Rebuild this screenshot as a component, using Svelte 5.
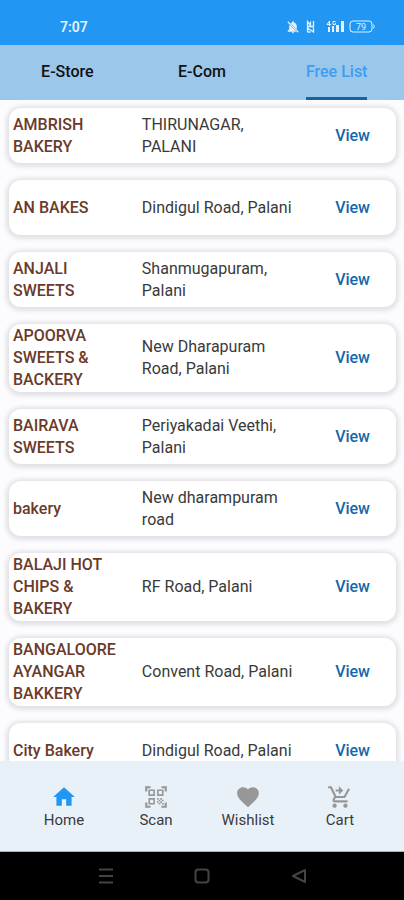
<script>
    let activeTab = $state("Free List");
    let activeNav = $state("Home");

    const tabs = ["E-Store", "E-Com", "Free List"];

    const shops = [
        { name: "AMBRISH BAKERY", address: "THIRUNAGAR, PALANI" },
        { name: "AN BAKES", address: "Dindigul Road, Palani" },
        { name: "ANJALI SWEETS", address: "Shanmugapuram, Palani" },
        { name: "APOORVA SWEETS & BACKERY", address: "New Dharapuram Road, Palani" },
        { name: "BAIRAVA SWEETS", address: "Periyakadai Veethi, Palani" },
        { name: "bakery", address: "New dharampuram road" },
        { name: "BALAJI HOT CHIPS & BAKERY", address: "RF Road, Palani" },
        { name: "BANGALOORE AYANGAR BAKKERY", address: "Convent Road, Palani" },
        { name: "City Bakery", address: "Dindigul Road, Palani" },
    ];

    const navItems = [
        { label: "Home", path: "M10 20v-6h4v6h5v-8h3L12 3 2 12h3v8z" },
        {
            label: "Scan",
            path: "M9.5 6.5v3h-3v-3h3M11 5H5v6h6V5zm-1.5 9.5v3h-3v-3h3M11 13H5v6h6v-6zm6.5-6.5v3h-3v-3h3M19 5h-6v6h6V5zm-6 8h1.5v1.5H13V13zm1.5 1.5H16V16h-1.500v-1.5zM16 13h1.5v1.5H16V13zm-3 3h1.5v1.5H13V16zm1.5 1.5H16V19h-1.5v-1.5zM16 16h1.5v1.5H16V16zm1.5-1.5H19V16h-1.5v-1.5zm0 3H19V19h-1.5v-1.5zM22 7h-2V4h-3V2h5v5zm0 15v-5h-2v3h-3v2h5zM2 22h5v-2H4v-3H2v5zM2 2v5h2V4h3V2H2z",
        },
        {
            label: "Wishlist",
            path: "M12 21.35l-1.45-1.32C5.4 15.36 2 12.28 2 8.5 2 5.42 4.42 3 7.5 3c1.74 0 3.41.81 4.5 2.09C13.09 3.81 14.76 3 16.5 3 19.58 3 22 5.42 22 8.5c0 3.78-3.4 6.86-8.55 11.54L12 21.35z",
        },
        {
            label: "Cart",
            path: "M11 9V7H8V5h3V2l4 4-4 4zM7 18c-1.1 0-1.99.9-1.99 2S5.9 22 7 22s2-.9 2-2-.9-2-2-2zm10 0c-1.1 0-1.99.9-1.99 2s.89 2 1.99 2 2-.9 2-2-.9-2-2-2zm-9.83-3.25l.03-.12.9-1.63h7.45c.75 0 1.41-.41 1.75-1.03l3.86-7.01L19.42 4l-1.1 2-2.76 5H8.53l-.13-.27L6.16 6l-.95-2-.94-2H1v2h2l3.6 7.59-1.35 2.45c-.16.28-.25.61-.25.96 0 1.1.9 2 2 2h12v-2H7.42c-.13 0-.25-.11-.25-.25z",
        },
    ];
</script>

<div class="screen">
    <header class="status">
        <span class="time">7:07</span>
        <div class="status-icons">
            <svg width="14" height="14" viewBox="0 0 24 24" role="img" aria-label="Silent">
                <path fill="currentColor" d="M12 23c1.1 0 2-.9 2-2h-4c0 1.100.9 2 2 2zM7.600 5.300L18.500 16.200V11c0-3.500-1.800-6.200-5-6.900V3.500a1.500 1.500 0 0 0-3 0v.6c-1.100.2-2.100.6-2.900 1.200zM6.200 8.500C5.800 9.300 5.500 10.100 5.500 11v5L3 18.500V20h14.700z" />
                <path fill="none" stroke="currentColor" stroke-width="2" d="M3 3l18 18" />
            </svg>
            <svg class="nfc" width="9" height="13" viewBox="0 0 9 13" role="img" aria-label="NFC">
                <path fill="none" stroke="currentColor" stroke-width="1.3" d="M1.500 6V1.500l3 4v-4M7.500 1v5M1 6.500h7M1.500 12V8l6 4V7.500M1.500 12h3" />
            </svg>
            <svg width="18" height="13" viewBox="0 0 18 13" role="img" aria-label="4G signal">
                <path fill="currentColor" d="M2 7h2v5H2zM6 6h2v6H6zM10 5h3v7h-3zM15 1h3v11h-3z" />
                <path fill="none" stroke="currentColor" d="M3.500 6V1L1 4.500h4M9.500 1.500H7v3h2.500V3" />
            </svg>
            <svg class="battery" width="26" height="13" viewBox="0 0 26 13" role="img" aria-label="Battery 79%">
                <rect x="1" y="1" width="22" height="11" rx="3" fill="none" stroke="currentColor" />
                <path d="M24.500 4.500q1.500 2 0 4" fill="none" stroke="currentColor" />
                <text x="12" y="10" text-anchor="middle" fill="currentColor">79</text>
            </svg>
        </div>
    </header>

    <div class="tabs" role="tablist">
        {#each tabs as tab}
            <button class="tab" class:active={activeTab === tab} role="tab" aria-selected={activeTab === tab} onclick={() => (activeTab = tab)}>
                <span>{tab}</span>
            </button>
        {/each}
    </div>

    <main>
        <ul class="shops">
            {#each shops as shop}
                <li class="card">
                    <div class="name">{shop.name}</div>
                    <div class="address">{shop.address}</div>
                    <button class="view" aria-label="View {shop.name}">View</button>
                </li>
            {/each}
        </ul>
    </main>

    <nav class="bottom">
        {#each navItems as item}
            <button class="nav-item" class:active={activeNav === item.label} onclick={() => (activeNav = item.label)}>
                <svg width="26" height="26" viewBox="0 0 24 24" aria-hidden="true">
                    <path fill="currentColor" d={item.path} />
                </svg>
                <span>{item.label}</span>
            </button>
        {/each}
    </nav>

    <footer class="system">
        <button aria-label="Recent apps">
            <svg width="16" height="16" viewBox="0 0 16 16">
                <path d="M1 1.500h14M1 8h14M1 14.500h14" />
            </svg>
        </button>
        <button aria-label="Home screen">
            <svg width="16" height="16" viewBox="0 0 16 16">
                <rect x="1.500" y="1.500" width="13" height="13" rx="3" />
            </svg>
        </button>
        <button aria-label="Back">
            <svg width="16" height="16" viewBox="0 0 16 16">
                <path stroke-linejoin="round" d="M15 2v12L3 8z" />
            </svg>
        </button>
    </footer>
</div>

<style>
    :global(body) {
        margin: 0;
    }
    .screen {
        display: flex;
        flex-direction: column;
        height: 100vh;
        background: #fcfcff;
        font-family: Roboto, "Liberation Sans", sans-serif;
        color: #3a3a3a;
    }
    button {
        margin: 0;
        padding: 0;
        border: 0;
        background: none;
        font: inherit;
        color: inherit;
        cursor: pointer;
    }
    .status {
        display: flex;
        justify-content: space-between;
        align-items: center;
        height: 37px;
        padding: 8px 29px 0 60px;
        background: #2196f3;
        color: #e4f2fd;
    }
    .time {
        font-size: 14px;
        font-weight: 600;
    }
    .status-icons {
        display: flex;
        align-items: center;
    }
    .nfc {
        margin: 0 11px 0 6px;
    }
    .battery {
        margin-left: 5px;
    }
    .battery text {
        font-size: 9px;
    }
    .tabs {
        display: flex;
        height: 55px;
        background: #9bc7ea;
    }
    .tab {
        flex: 1;
        display: flex;
        justify-content: center;
        font-size: 16px;
        font-weight: 500;
        color: #111;
    }
    .tab span {
        box-sizing: border-box;
        height: 100%;
        line-height: 54px;
        border-bottom: 3px solid transparent;
    }
    .tab.active {
        color: #3d9df0;
    }
    .tab.active span {
        border-color: #1563a0;
        border-radius: 2px 2px 0 0;
    }
    main {
        flex: 1;
        min-height: 0;
        overflow-y: auto;
        scrollbar-width: none;
    }
    .shops {
        display: flex;
        flex-direction: column;
        gap: 17px;
        margin: 0;
        padding: 8px 8px 17px 9px;
        list-style: none;
    }
    .card {
        display: grid;
        grid-template-columns: 34% 51% 1fr;
        align-items: center;
        box-sizing: border-box;
        min-height: 55px;
        padding: 1px 4px;
        border-radius: 12px;
        background: #fff;
        box-shadow: 0 1px 4px 3px #e2e2e6;
        font-size: 16px;
        line-height: 22px;
    }
    .name {
        padding-right: 16px;
        font-weight: 500;
        color: #6b3a2a;
    }
    .address {
        padding-right: 36px;
    }
    .view {
        justify-self: start;
        font-weight: 500;
        color: #1467ac;
    }
    .bottom {
        display: flex;
        height: 90px;
        padding: 0 18px;
        background: #e9f1f8;
        border-bottom: 1px solid #a9b4ba;
    }
    .nav-item {
        flex: 1;
        display: flex;
        flex-direction: column;
        align-items: center;
        justify-content: center;
        gap: 1px;
        font-size: 15px;
        line-height: 18px;
    }
    .nav-item svg {
        color: #979797;
    }
    .nav-item.active svg {
        color: #2196f3;
    }
    .system {
        display: flex;
        justify-content: center;
        gap: 80px;
        height: 48px;
        background: #000;
    }
    .system button {
        display: flex;
        align-items: center;
    }
    .system svg {
        fill: none;
        stroke: #444;
        stroke-width: 2;
    }
</style>
